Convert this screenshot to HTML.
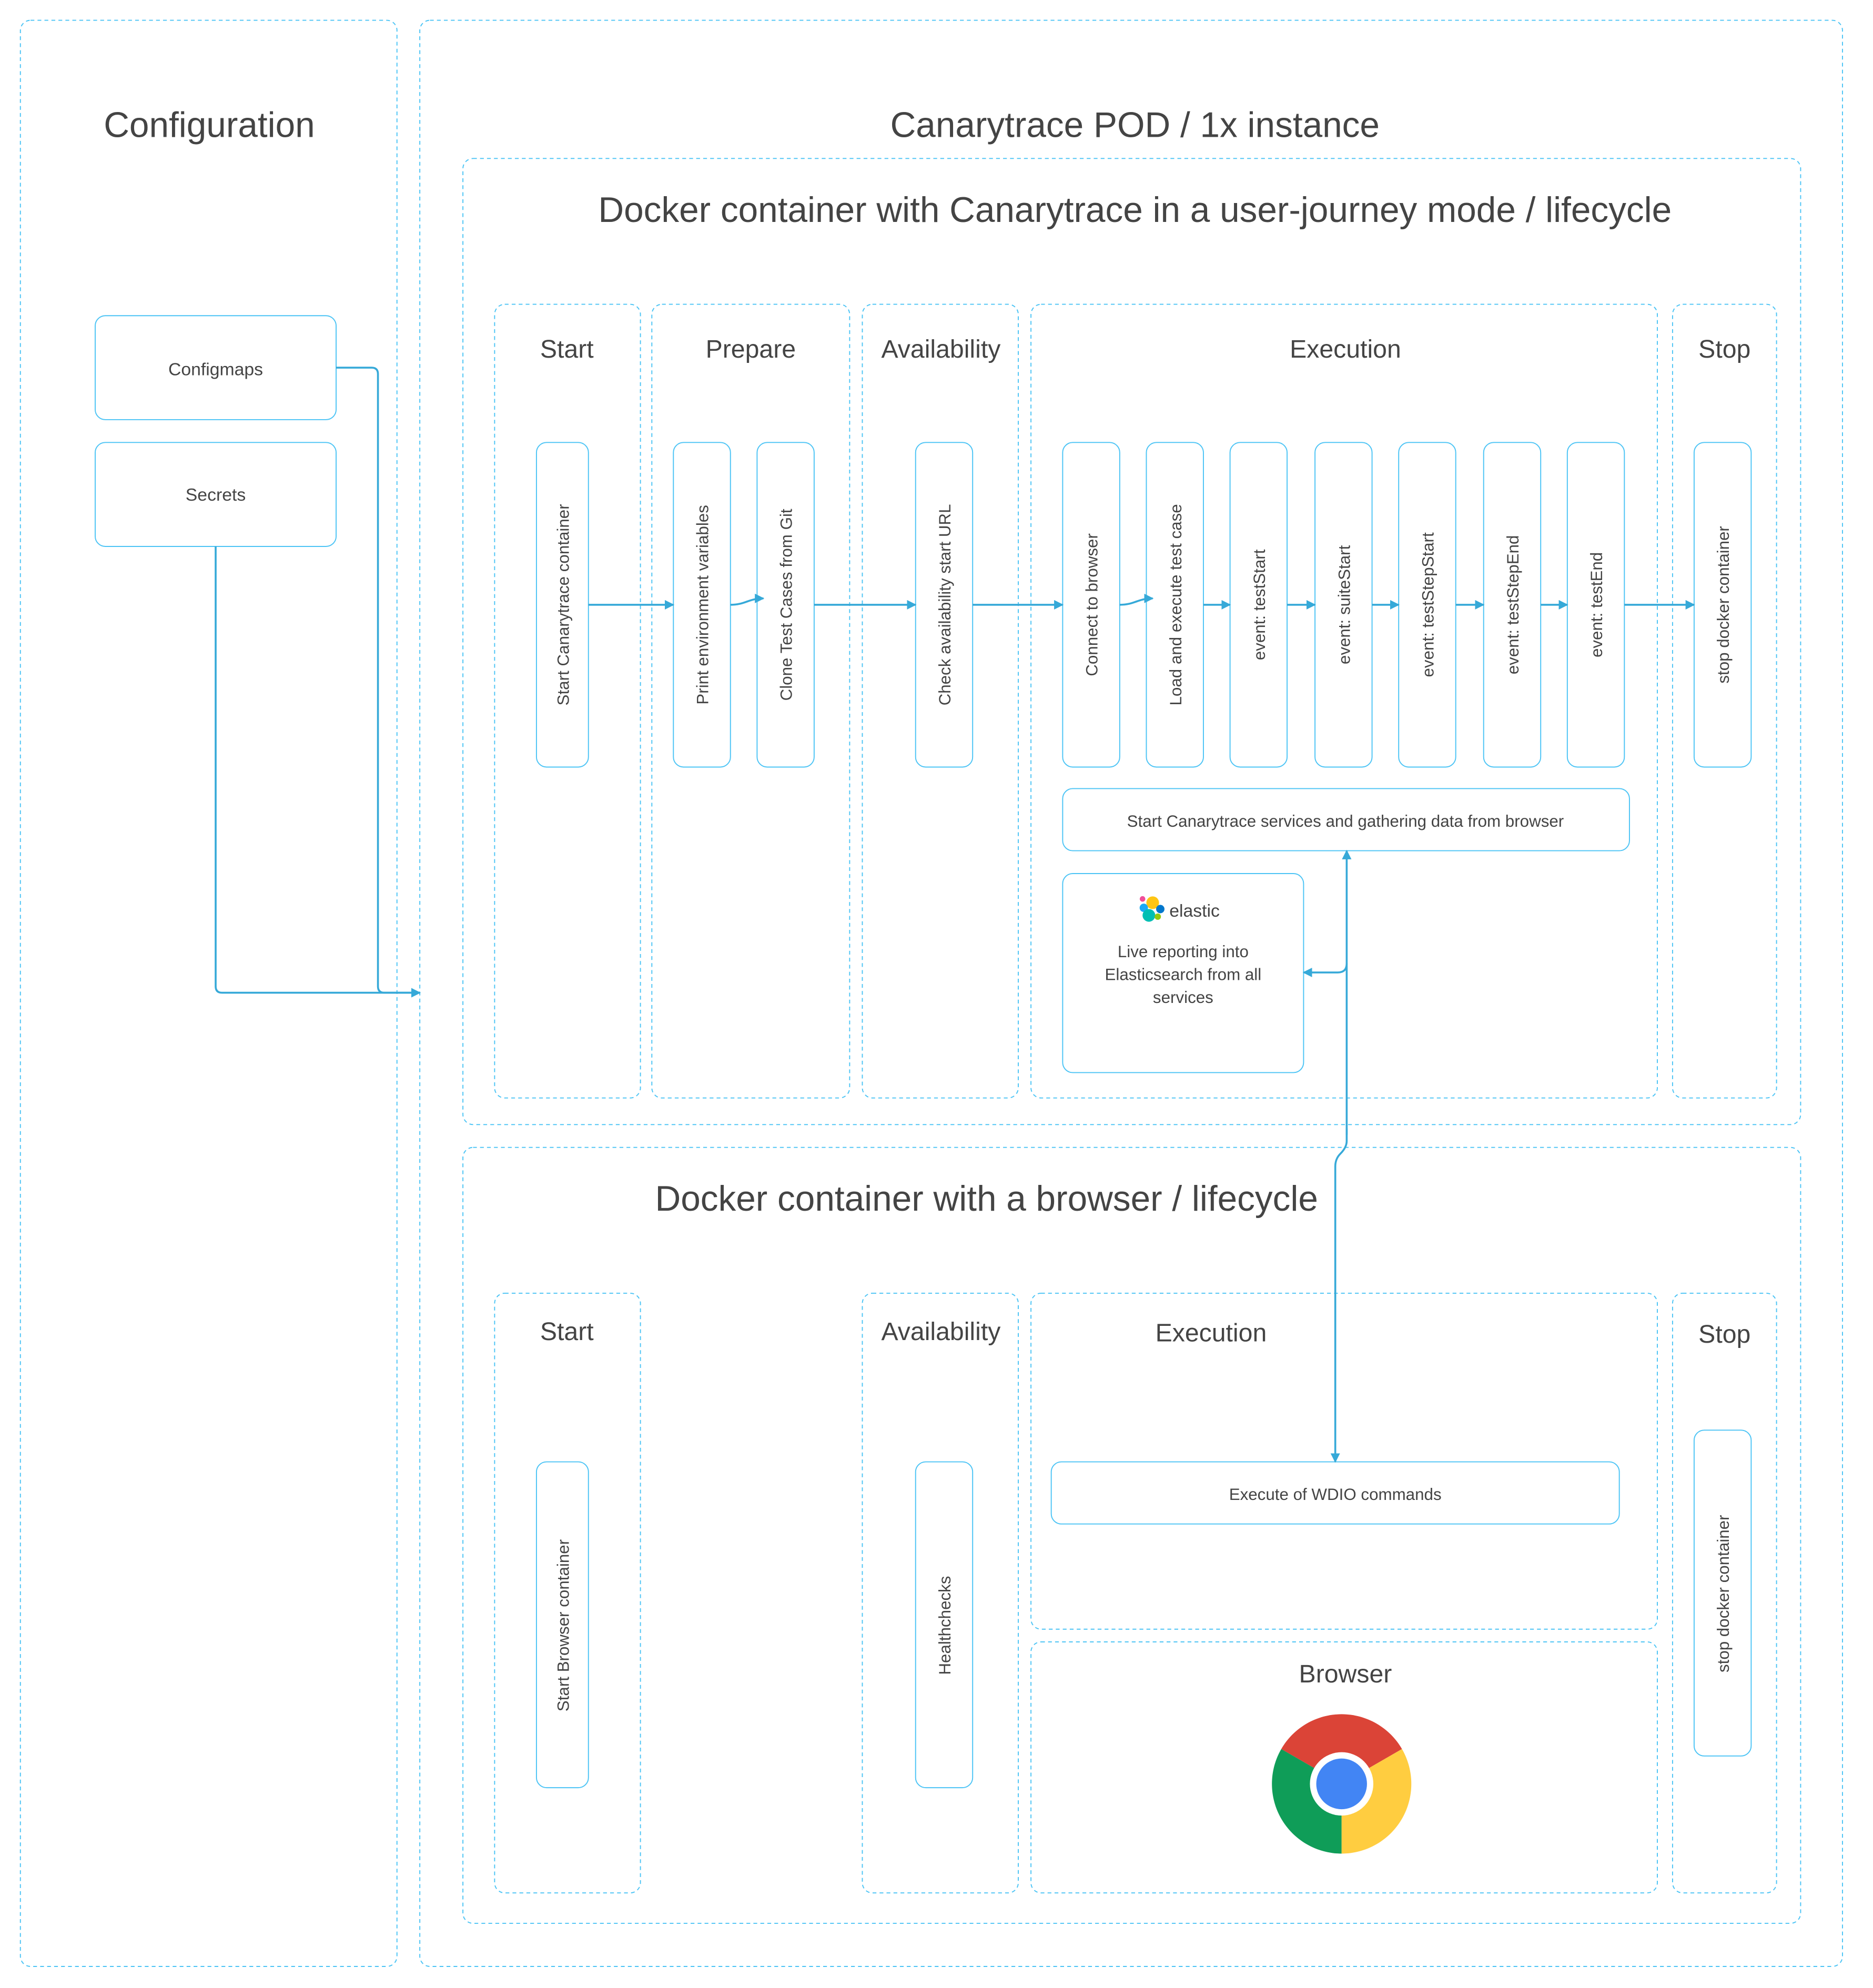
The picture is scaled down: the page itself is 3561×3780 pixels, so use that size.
<!DOCTYPE html>
<html><head><meta charset="utf-8"><style>
html,body{margin:0;padding:0;background:#fff}
svg{display:block}
text{font-family:"Liberation Sans","DejaVu Sans",sans-serif;fill:#444}
</style></head><body>
<svg width="3561" height="3780" viewBox="0 0 1477 1568" xmlns="http://www.w3.org/2000/svg">
<defs>
<marker id="ar" viewBox="0 0 10 10" refX="9" refY="5" markerWidth="5" markerHeight="5" orient="auto"><path d="M0,0 L10,5 L0,10 z" fill="#36a9d8"/></marker>
</defs>
<g fill="none" stroke="#4cc4f5" stroke-width="0.8" stroke-dasharray="3,2.5">
<rect x="16" y="16" width="297" height="1535" rx="8"/>
<rect x="331" y="16" width="1122" height="1535" rx="8"/>
<rect x="365" y="125" width="1055" height="762" rx="8"/>
<rect x="390" y="240" width="115" height="626" rx="8"/>
<rect x="514" y="240" width="156" height="626" rx="8"/>
<rect x="680" y="240" width="123" height="626" rx="8"/>
<rect x="813" y="240" width="494" height="626" rx="8"/>
<rect x="1319" y="240" width="82" height="626" rx="8"/>
<rect x="365" y="905" width="1055" height="612" rx="8"/>
<rect x="390" y="1020" width="115" height="473" rx="8"/>
<rect x="680" y="1020" width="123" height="473" rx="8"/>
<rect x="813" y="1020" width="494" height="265" rx="8"/>
<rect x="813" y="1295" width="494" height="198" rx="8"/>
<rect x="1319" y="1020" width="82" height="473" rx="8"/>
</g>
<g fill="#fff" stroke="#4cc4f5" stroke-width="0.8">
<rect x="75" y="249" width="190" height="82" rx="8"/>
<rect x="75" y="349" width="190" height="82" rx="8"/>
<rect x="423" y="349" width="41" height="256" rx="8"/>
<rect x="531" y="349" width="45" height="256" rx="8"/>
<rect x="597" y="349" width="45" height="256" rx="8"/>
<rect x="722" y="349" width="45" height="256" rx="8"/>
<rect x="838" y="349" width="45" height="256" rx="8"/>
<rect x="904" y="349" width="45" height="256" rx="8"/>
<rect x="970" y="349" width="45" height="256" rx="8"/>
<rect x="1037" y="349" width="45" height="256" rx="8"/>
<rect x="1103" y="349" width="45" height="256" rx="8"/>
<rect x="1170" y="349" width="45" height="256" rx="8"/>
<rect x="1236" y="349" width="45" height="256" rx="8"/>
<rect x="1336" y="349" width="45" height="256" rx="8"/>
<rect x="838" y="622" width="447" height="49" rx="8"/>
<rect x="838" y="689" width="190" height="157" rx="8"/>
<rect x="423" y="1153" width="41" height="257" rx="8"/>
<rect x="722" y="1153" width="45" height="257" rx="8"/>
<rect x="829" y="1153" width="448" height="49" rx="8"/>
<rect x="1336" y="1128" width="45" height="257" rx="8"/>
</g>
<g fill="none" stroke="#36a9d8" stroke-width="1.5" marker-end="url(#ar)">
<path d="M464,477 H531"/>
<path d="M576,477 C588,477 590,472 602,472"/>
<path d="M642,477 H722"/>
<path d="M767,477 H838"/>
<path d="M883,477 C895,477 897,472 909,472"/>
<path d="M949,477 H970"/>
<path d="M1015,477 H1037"/>
<path d="M1082,477 H1103"/>
<path d="M1148,477 H1170"/>
<path d="M1215,477 H1236"/>
<path d="M1281,477 H1336"/>
<path d="M265,290 H293 Q298,290 298,295 V778 Q298,783 303,783 H331"/>
<path d="M170,431 V778 Q170,783 175,783 H331"/>
<path d="M1062,895 V671"/>
<path d="M1062,760 Q1062,767 1055,767 H1028"/>
<path d="M1062,890 V900 Q1062,905 1057,910 Q1053,914 1053,920 V1153"/>
</g>
<g font-size="28" text-anchor="middle">
<text x="165" y="108">Configuration</text>
<text x="895" y="108">Canarytrace POD / 1x instance</text>
<text x="895" y="175">Docker container with Canarytrace in a user-journey mode / lifecycle</text>
<text x="778" y="955">Docker container with a browser / lifecycle</text>
</g>
<g font-size="20" text-anchor="middle">
<text x="447" y="282">Start</text>
<text x="592" y="282">Prepare</text>
<text x="742" y="282">Availability</text>
<text x="1061" y="282">Execution</text>
<text x="1360" y="282">Stop</text>
<text x="447" y="1057">Start</text>
<text x="742" y="1057">Availability</text>
<text x="955" y="1058">Execution</text>
<text x="1360" y="1059">Stop</text>
<text x="1061" y="1327">Browser</text>
</g>
<g font-size="14" text-anchor="middle">
<text x="170" y="296">Configmaps</text>
<text x="170" y="395">Secrets</text>
<text x="1061" y="652" font-size="13">Start Canarytrace services and gathering data from browser</text>
<text x="1053" y="1183" font-size="13">Execute of WDIO commands</text>
<text x="933" y="755" font-size="13">Live reporting into</text>
<text x="933" y="773" font-size="13">Elasticsearch from all</text>
<text x="933" y="791" font-size="13">services</text>
<text x="942" y="723" font-size="14" fill="#222">elastic</text>
</g>
<g font-size="13" text-anchor="middle">
<text transform="translate(448.5,477) rotate(-90)">Start Canarytrace container</text>
<text transform="translate(558.5,477) rotate(-90)">Print environment variables</text>
<text transform="translate(624.5,477) rotate(-90)">Clone Test Cases from Git</text>
<text transform="translate(749.5,477) rotate(-90)">Check availability start URL</text>
<text transform="translate(865.5,477) rotate(-90)">Connect to browser</text>
<text transform="translate(931.5,477) rotate(-90)">Load and execute test case</text>
<text transform="translate(997.5,477) rotate(-90)">event: testStart</text>
<text transform="translate(1064.5,477) rotate(-90)">event: suiteStart</text>
<text transform="translate(1130.5,477) rotate(-90)">event: testStepStart</text>
<text transform="translate(1197.5,477) rotate(-90)">event: testStepEnd</text>
<text transform="translate(1263.5,477) rotate(-90)">event: testEnd</text>
<text transform="translate(1363.5,477) rotate(-90)">stop docker container</text>
<text transform="translate(448.5,1282) rotate(-90)">Start Browser container</text>
<text transform="translate(749.5,1282) rotate(-90)">Healthchecks</text>
<text transform="translate(1363.5,1257) rotate(-90)">stop docker container</text>
</g>
<g>
<circle cx="909" cy="712" r="5" fill="#fec514"/>
<circle cx="901" cy="709" r="2.2" fill="#f04e98"/>
<circle cx="902" cy="716" r="3.3" fill="#1ba9f5"/>
<circle cx="915" cy="717" r="3.3" fill="#0077cc"/>
<circle cx="906" cy="722" r="5" fill="#00bfb3"/>
<circle cx="913" cy="723" r="2.5" fill="#93c90e"/>
</g>
<g transform="translate(1058,1407)">
<path d="M0,0 L47.6,-27.5 A55,55 0 0 0 -47.6,-27.5 Z" fill="#db4437"/>
<path d="M0,0 L-47.6,-27.5 A55,55 0 0 0 0,55 Z" fill="#0f9d58"/>
<path d="M0,0 L0,55 A55,55 0 0 0 47.6,-27.5 Z" fill="#ffcd40"/>
<circle r="25" fill="#fff"/>
<circle r="20" fill="#4285f4"/>
</g>
</svg>
</body></html>
